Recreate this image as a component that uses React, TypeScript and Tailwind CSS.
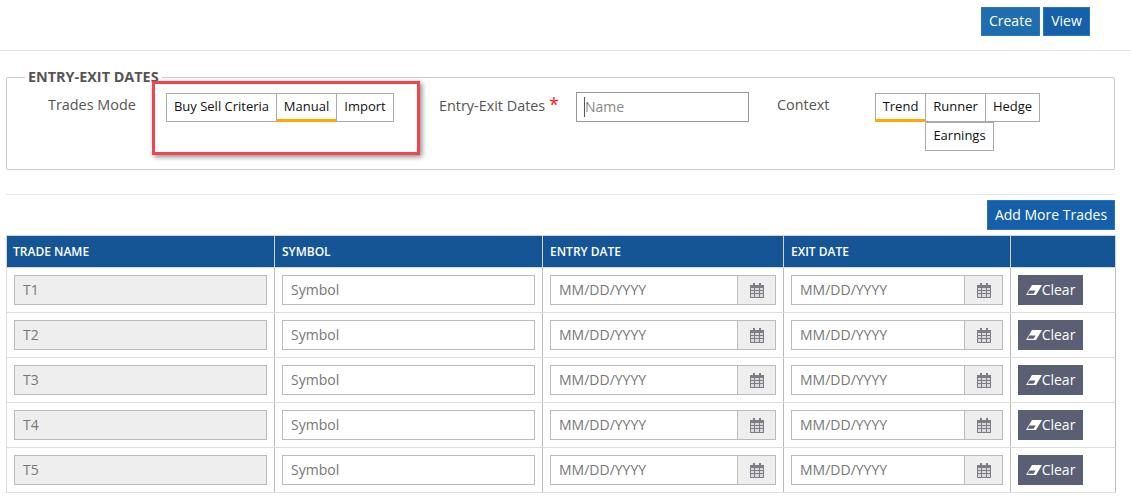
const ROWS = ['T1', 'T2', 'T3', 'T4', 'T5']

const Tab = ({ label, active, w, className = '-ml-px first:ml-0' }: { label: string; active?: boolean; w: string; className?: string }) => (
  <div
    className={`${w} ${className} h-[29px] border border-[#aaaaaa] flex items-center justify-center text-[13px] text-[#111] ${
      active ? 'border-b-[3px] border-b-[#ffa800] pt-px' : 'pb-px'
    }`}
  >
    {label}
  </div>
)

const CalendarIcon = () => (
  <svg width="14" height="15" viewBox="0 0 14 15" shapeRendering="crispEdges">
    <path fill="#7d7d86" d="M0 2h3V0h2v2h4V0h2v2h3v13H0z" />
    <path
      fill="#d8d8de"
      d="M1 5h3v2H1zM5 5h4v2H5zM10 5h3v2h-3zM1 8h3v2H1zM5 8h4v2H5zM10 8h3v2h-3zM1 11h3v3H1zM5 11h4v3H5zM10 11h3v3h-3z"
    />
  </svg>
)

const DateField = ({ w }: { w: string }) => (
  <div className={`${w} h-[30px] border border-[#bbbbbb] flex`}>
    <div className="flex-1 pl-2 pb-px flex items-center text-[14px] text-[#777]">MM/DD/YYYY</div>
    <div className="w-[38px] border-l border-[#bbbbbb] bg-[#eeeeee] flex items-center justify-center">
      <CalendarIcon />
    </div>
  </div>
)

const EraserIcon = () => (
  <svg width="16" height="10" viewBox="0 0 16 10">
    <path fill="#ffffff" d="M6 0h10l-6 10H0z" />
    <path fill="#5a5f74" d="M3.4 5.6h6.2L7.6 8.8H1.6z" />
  </svg>
)

export default function App() {
  return (
    <div className="relative w-[1131px] h-[504px] bg-white overflow-hidden text-[14px] text-[#555] font-['Open_Sans',sans-serif]">
      {/* Top actions */}
      <div className="h-[51px] border-b border-[#e4e4e4] flex justify-end items-start gap-[3px] pt-[7px] pr-[41px]">
        <button className="w-[59px] h-[29px] pb-0.5 bg-[#1f6dae] border border-[#2a77b8] text-white text-[14px]">Create</button>
        <button className="w-[47px] h-[29px] pb-0.5 bg-[#1560a9] border border-[#2a77b8] text-white text-[14px]">View</button>
      </div>

      {/* Entry-exit dates */}
      <fieldset className="ml-[6px] mt-[16px] w-[1109px] h-[103px] border border-[#cccccc] rounded-[2px] pl-[18px]">
        <legend className="px-[3px] pb-[2px] text-[14.4px] font-bold leading-[19px] text-[#555]">ENTRY-EXIT DATES</legend>
        <div className="flex items-start mt-[4px]">
          <div className="ml-[23px] w-[118px] text-[14.4px] leading-[19px] mt-[3px]">Trades Mode</div>
          <div className="flex w-[273px] mt-px">
            <Tab label="Buy Sell Criteria" w="w-[111px]" />
            <Tab label="Manual" active w="w-[61px]" />
            <Tab label="Import" w="w-[58px]" />
          </div>
          <div className="w-[137px] text-[14.4px] leading-[19px] mt-[3px]">
            Entry-Exit Dates <span className="text-[#f01c1c] text-[18px] leading-[19px]">*</span>
          </div>
          <div className="w-[173px] h-[30px] border border-[#999999] pl-[7px] flex items-center text-[14px] text-[#888]">
            <span className="border-l border-[#555] leading-[20px]">Name</span>
          </div>
          <div className="ml-[28px] w-[98px] text-[14.4px] leading-[19px] mt-[3px]">Context</div>
          <div className="flex items-start mt-px">
            <Tab label="Trend" active w="w-[51px]" />
            <div className="flex flex-wrap w-[116px]">
              <Tab label="Runner" w="w-[61px]" className="-ml-px" />
              <Tab label="Hedge" w="w-[55px]" className="-ml-px" />
              <Tab label="Earnings" w="w-[69px]" className="-ml-px" />
            </div>
          </div>
        </div>
      </fieldset>

      <div className="ml-[6px] mt-[24px] w-[1109px] border-t border-[#e8e8e8]" />

      <div className="ml-[6px] w-[1109px] flex justify-end mt-[5px]">
        <button className="w-[128px] h-[30px] pb-0.5 bg-[#1560a9] border border-[#2a77b8] text-white text-[14px]">Add More Trades</button>
      </div>

      {/* Trades table */}
      <table className="ml-[6px] mt-[5px] w-[1109px] table-fixed border-collapse">
        <colgroup>
          <col className="w-[268px]" />
          <col className="w-[268px]" />
          <col className="w-[241px]" />
          <col className="w-[227px]" />
          <col className="w-[105px]" />
        </colgroup>
        <thead>
          <tr className="h-[32px] bg-[#155596] text-white text-[12px] text-left">
            {['TRADE NAME', 'SYMBOL', 'ENTRY DATE', 'EXIT DATE', ''].map((title, i) => (
              <th key={i} className="border border-[#cfd5dc] pl-[7px] first:pl-[6px] font-semibold">
                {title}
              </th>
            ))}
          </tr>
        </thead>
        <tbody>
          {ROWS.map((name) => (
            <tr key={name} className="h-[45px]">
              <td className="border border-[#dddddd] border-r-[#bbbbbb] px-[7px]">
                <div className="h-[30px] border border-[#bbbbbb] bg-[#eeeeee] pl-2 pb-px flex items-center text-[#777]">{name}</div>
              </td>
              <td className="border border-[#dddddd] border-r-[#bbbbbb] px-[7px]">
                <div className="h-[30px] border border-[#bbbbbb] pl-2 pb-px flex items-center text-[#777]">Symbol</div>
              </td>
              <td className="border border-[#dddddd] border-r-[#bbbbbb] px-[7px]">
                <DateField w="w-[226px]" />
              </td>
              <td className="border border-[#dddddd] border-r-[#bbbbbb] px-[7px]">
                <DateField w="w-[212px]" />
              </td>
              <td className="border border-[#dddddd] border-r-[#bbbbbb] px-[7px]">
                <button className="w-[65px] h-[30px] pb-px bg-[#5a5f74] text-white text-[14px] flex items-center justify-center">
                  <EraserIcon />
                  Clear
                </button>
              </td>
            </tr>
          ))}
        </tbody>
      </table>

      {/* Red highlight annotation */}
      <div className="absolute left-[152px] top-[81px] w-[268px] h-[74px] border-[3px] border-[#f2444b] shadow-[2px_2px_5px_rgba(0,0,0,0.45)]" />
    </div>
  )
}
